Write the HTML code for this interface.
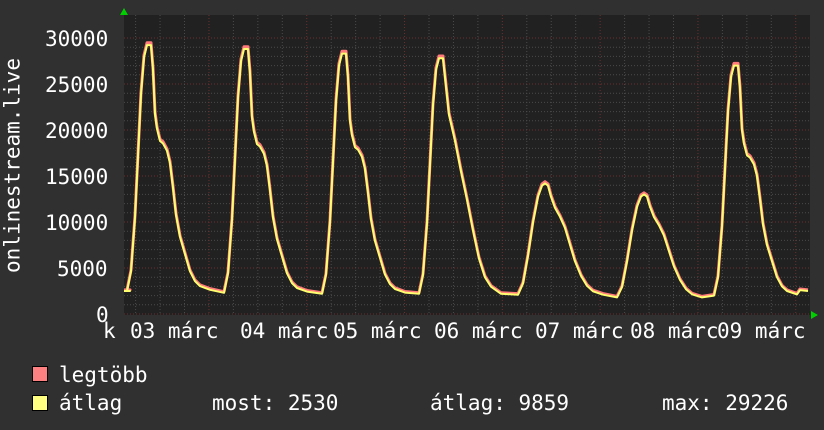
<!DOCTYPE html>
<html><head><meta charset="utf-8"><style>
html,body{margin:0;padding:0;background:#303030;}
body{width:824px;height:430px;overflow:hidden;position:relative;font-family:"DejaVu Sans Mono","Liberation Mono",monospace;color:#fff;}
.t{position:absolute;font-size:21px;white-space:pre;line-height:1;}
</style></head><body>
<svg width="824" height="430" style="position:absolute;left:0;top:0">
<rect x="124" y="15" width="686" height="300" fill="#212121"/>
<g id="grid"></g>
<polygon points="120,15 128,15 124,8" fill="#00d000"/>
<polygon points="811,311 811,319 818,315" fill="#00d000"/>
<path id="mx" fill="none" stroke="#ff7a7a" stroke-width="3" stroke-linejoin="round"/>
<path id="av" fill="none" stroke="#ffff70" stroke-width="2" stroke-linejoin="round"/>
<rect x="32.5" y="366.5" width="15" height="15" fill="#ff8080" stroke="#000"/>
<rect x="32.5" y="395.5" width="15" height="15" fill="#ffff80" stroke="#000"/>
</svg>
<div class="t" style="left:-102px;top:155px;transform:rotate(-90deg);width:230px;text-align:center">onlinestream.live</div>
<div class="t" style="left:45px;top:29px">30000</div>
<div class="t" style="left:45px;top:75px">25000</div>
<div class="t" style="left:45px;top:121px">20000</div>
<div class="t" style="left:45px;top:167px">15000</div>
<div class="t" style="left:45px;top:213px">10000</div>
<div class="t" style="left:57px;top:259px">5000</div>
<div class="t" style="left:96px;top:305px">0</div>
<div class="t" style="left:103px;top:321px">k</div>
<div id="xl"></div>
<div class="t" style="left:59px;top:365px">legtöbb</div>
<div class="t" style="left:59px;top:393px">átlag</div>
<div class="t" style="left:212px;top:393px">most: 2530</div>
<div class="t" style="left:430px;top:393px">átlag: 9859</div>
<div class="t" style="left:662px;top:393px">max: 29226</div>
<script>
var g='';
for(var i=0;i<=30;i++){var y=314-i*9.2;if(y<15)break;var maj=i%5==0;
g+='<line x1="124" x2="810" y1="'+y+'" y2="'+y+'" stroke="'+(maj?'#6a3030':'#4a4a4a')+'" stroke-dasharray="1,2"/>';}
for(var x=135.6;x<810;x+=24.45){var k=Math.round((x-209)/24.45);var maj=((k%4)+4)%4==0;
g+='<line y1="15" y2="315" x1="'+x+'" x2="'+x+'" stroke="'+(maj?'#6a3030':'#4a4a4a')+'" stroke-dasharray="1,2"/>';}
document.getElementById('grid').innerHTML=g;
var xl='';var d=['03','04','05','06','07','08','09'];var L=[130,240,333,434,535,630,717];
for(var i=0;i<7;i++){xl+='<div class="t" style="left:'+L[i]+'px;top:321px">'+d[i]+' márc</div>';}
document.getElementById('xl').innerHTML=xl;
function Y(v){return 314-v*0.0092;}
var A=[[-22,0],[-18,.08],[-14,.3],[-11,.55],[-8,.8],[-5,.95],[-2,1],[2,1],[4,.9],[6,.72],[8,.66],[11,.61],[14,.6],[18,.57],[21,.52],[24,.42],[27,.31],[31,.22],[36,.15],[41,.08],[46,.04],[51,.02],[61,.005]];
var B=[[-27,0],[-22,.1],[-17,.35],[-12,.65],[-7,.88],[-3,.98],[0,1],[3,.98],[6,.88],[10,.78],[15,.7],[20,.6],[25,.45],[30,.3],[36,.17],[42,.08],[48,.03],[58,0]];
var C=[[-22,0],[-18,.08],[-14,.3],[-11,.55],[-8,.8],[-5,.95],[-2,1],[2,1],[5,.88],[8,.76],[14,.65],[20,.52],[26,.4],[32,.27],[38,.15],[44,.07],[50,.03],[60,0]];
var P=[[149,29226,2500,A],[246,28800,2300,A],[344,28300,2200,A],[441,27800,2200,C],[545,14200,2100,B],[644,13000,1800,B],[736,27000,2000,A]];
var pts=[[124,2500],[130,2500]];
P.forEach(function(p){p[3].forEach(function(t){pts.push([p[0]+t[0],p[2]+(p[1]-p[2])*t[1]]);});});
pts.push([800,2600],[808,2500]);
function path(dy,sc){return 'M'+pts.map(function(q){return q[0]+','+(Y(q[1]*sc)-dy).toFixed(1)}).join(' L');}
document.getElementById('mx').setAttribute('d',path(1,1.005));
document.getElementById('av').setAttribute('d',path(0,1));
</script>
</body></html>
